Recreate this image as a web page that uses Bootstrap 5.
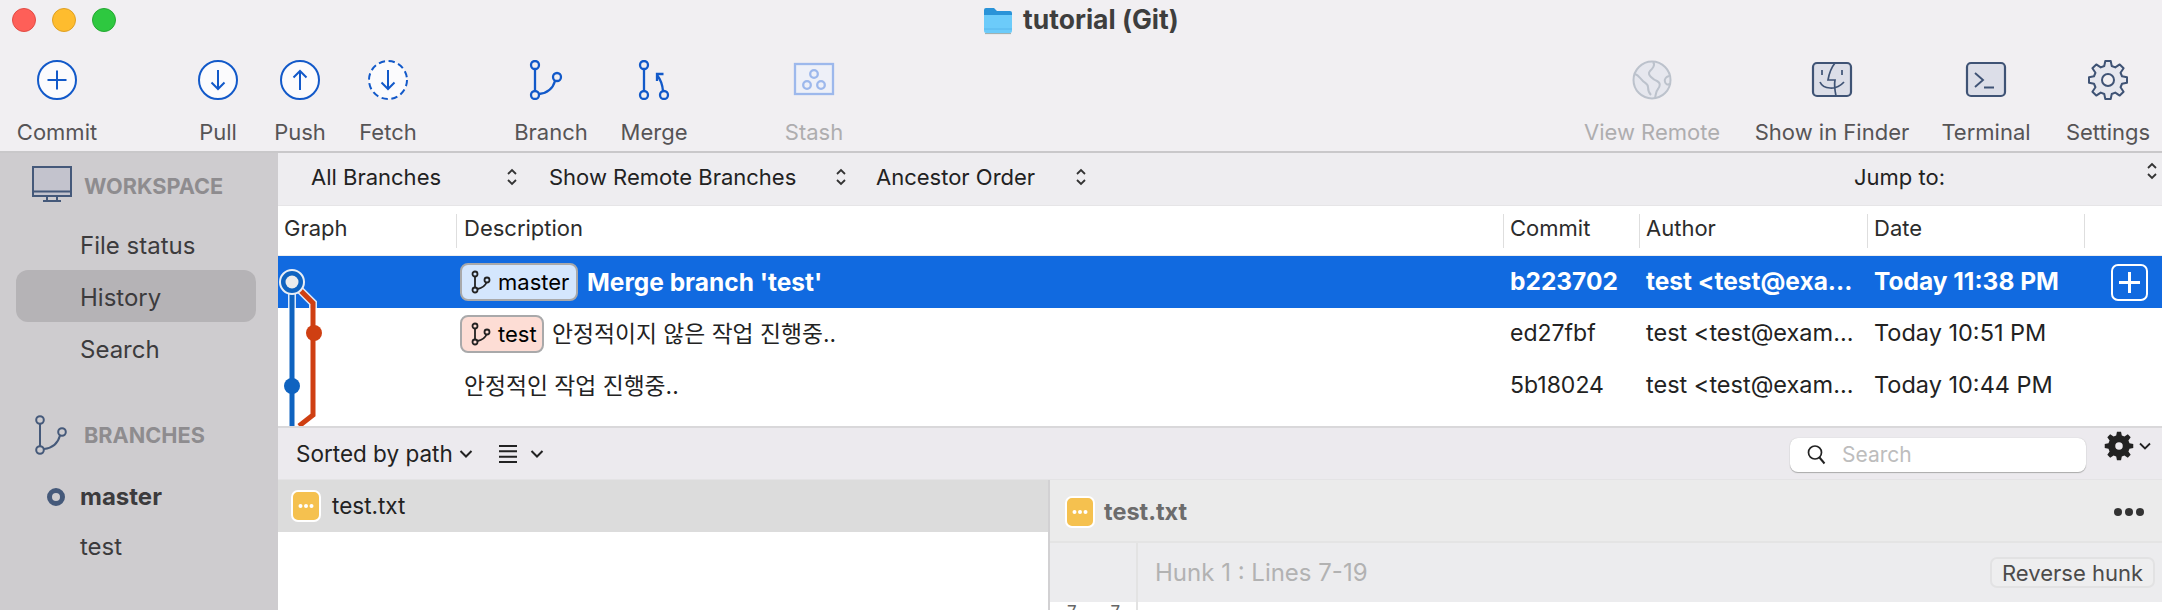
<!doctype html>
<html lang="en">
<head>
<meta charset="utf-8">
<title>tutorial (Git)</title>
<link href="https://cdn.jsdelivr.net/npm/bootstrap@5.3.0/dist/css/bootstrap.min.css" rel="stylesheet">
<style>
html,body{height:610px;overflow:hidden}
body{font-family:Inter,"Noto Sans CJK KR",sans-serif;font-size:22px;color:#222;background:#fff;width:2162px}
.app-top{height:153px;background:#f1eff2;border-bottom:2px solid #c9c8ca}
.title-bar{height:40px;padding-left:12px}
.light{width:24px;height:24px;border-radius:50%;margin-right:16px;flex:none}
.l-red{background:#fe5f58;border:1px solid #e24b44}.l-yel{background:#febc2e;border:1px solid #dfa023}.l-grn{background:#2ec840;border:1px solid #25a832}
.win-title{font-weight:700;font-size:26.500px;color:#3e3e3e;margin-left:851px;gap:10px;white-space:nowrap}
.tools{height:111px}
.tool{height:111px;color:#565456;font-size:22px;padding-top:20px;flex:none}
.tool svg{display:block;height:40px;flex:none}
.tool span{margin-top:20px;line-height:24px;white-space:nowrap}
.tool.off span{color:#aeadaf}
.w114{width:114px}.w72{width:72px}.w92{width:92px}.w84{width:84px}.w90{width:90px}.w116{width:116px}.w160{width:160px}.w200{width:200px}.w108{width:108px}
.gap76{width:76px;flex:none}.gap57{width:57px;flex:none}.gap14{width:14px;flex:none}.gap68{width:68px;flex:none}
.app-body{height:457px}
.side{width:278px;background:#cecccf;flex:none;color:#3c3b3d;font-size:24px}
.side-head{font-weight:700;font-size:21.700px;color:#8e8c8f}
.head-ws{height:56px;padding:13px 0 0 32px;gap:12px}
.head-br{height:50px;margin-top:36px;padding:0 0 0 35px;gap:16px}
.side-item{height:52px;margin:0 22px 0 16px;padding-left:64px;border-radius:12px;line-height:55px}
.side-item.is-on{background:#b5b3b6}
.side-list{margin-top:9px}
.br-item{height:50px;padding-left:80px;line-height:50px}
.br-list{margin-top:12px}
.cur-dot{width:18px;height:18px;border:5px solid #45597a;border-radius:50%;margin-left:-33px;margin-right:15px;flex:none}
.main-col{min-width:0;flex:1}
.filters{height:53px;background:#eeedf0;border-bottom:1px solid #e6e5e7;font-size:22px;color:#222;padding-bottom:4px;white-space:nowrap}
.f1{width:240px;padding-left:33px;flex:none}.f2{width:329px;padding-left:31px;flex:none}.f3{width:240px;padding-left:29px;flex:none}
.f-jump{margin-left:auto;margin-right:201px}
.f-end{position:relative;top:-6px;margin-right:4px}
.ud{flex:none;display:block}
.f1,.f2,.f3{justify-content:space-between}
.log{height:222px;position:relative;background:#fff;border-bottom:2px solid #d9d8da}
.cols{display:grid;grid-template-columns:179px 1047px 136px 228px 217px 77px}
.log-head{height:50px;color:#2c2c2c;font-size:22px;border-bottom:1px solid #eee}
.log-head>div{padding:0 0 5px 6px;line-height:29px;height:34px;margin-top:8px;border-right:1px solid #dedede}
.log-head>div:nth-child(2){padding-left:7px}
.log-head>div:last-child{border-right:0}
.log-row{height:52px;font-size:23.500px;color:#222;align-items:center}
.log-row>div{padding-left:6px;padding-bottom:2px;white-space:nowrap;overflow:hidden}
.log-row .c-hash{font-size:23px}
.log-row.is-sel{background:#116ae0;color:#fff;font-weight:700;font-size:24.500px}
.log-row.is-sel .c-hash{font-size:24.500px}
.log-row .c-desc{padding-left:3px;padding-bottom:0;display:flex;align-items:center;gap:8px;font-size:22.800px}
.is-sel .c-desc{font-size:24.500px!important;gap:9px}
.log-row .c-desc.txt-only{padding-left:7px}
.ref{display:inline-flex;align-items:center;height:38px;border:2px solid #a9a9aa;border-radius:8px;font-weight:400;color:#000;font-size:22px;padding:0 0 0 9px;gap:7px;flex:none}
.ref-m{background:#d4e6fd;width:118px}.ref-t{background:#fdddd5;width:84px}
.add-box{width:37px;height:37px;border:2px solid #fff;border-radius:7px;margin-left:20px;margin-top:2px}
.log-graph{position:absolute;left:0;top:50px}
.strip{height:52px;background:#eceaee;border-bottom:1px solid #e4e3e5;padding-left:18px;font-size:22.500px}
.srt{gap:6px}
.m-l26{margin-left:26px}.m-l13{margin-left:13px}
.srch{width:296px;height:34px;margin-left:auto;margin-top:2px;background:#fff;border:0;border-radius:8px;box-shadow:0 1px 1px #aaa,0 0 1px #bbb;padding-left:17px;gap:15px;color:#bdbdbd;font-size:21px}
.gear-wrap{margin:0 11px 0 18px;gap:5px;position:relative;top:-8px}
.lower{height:130px;overflow:hidden}
.files{width:770px;flex:none;background:#fff}
.file-row{height:52px;background:#dcdcdc;padding-left:13px;gap:11px;font-size:22.500px}
.mod-ic{flex:none;display:block}
.diff{border-left:2px solid #d2d1d3;min-width:0;flex:1;background:#fff}
.diff-head{height:63px;background:#ebebeb;border-bottom:2px solid #e4e4e4;padding:3px 17px 0 15px;gap:9px;font-weight:700;color:#6c6c6c;font-size:23.500px}
.diff-head svg.dots{margin-left:auto}
.hunk{height:59px;background:#ececee}
.gutter{width:88px;flex:none;border-right:2px solid #e3e3e3}
.hunk-txt{padding-left:17px;color:#b2b2b2;font-size:24px;flex:1}
.rev-btn{font-size:22px;line-height:1;color:#4b4b4b;background:#eeeeef;border:2px solid #e2e2e3;border-radius:7px;height:31px;width:165px;padding:0;margin-right:7px;white-space:nowrap}
.rev-btn:hover{color:#4b4b4b;background:#eeeeef;border-color:#e2e2e3}
.line-row{height:20px;background:#fff}
.line-nums{width:88px;flex:none;border-right:2px solid #e3e3e3;font-size:17px;color:#666;padding:0 16px 0 17px;line-height:20px;justify-content:space-between}
</style>
</head>
<body>
<div class="app-top">
  <div class="title-bar d-flex align-items-center">
    <div class="light l-red"></div><div class="light l-yel"></div><div class="light l-grn"></div>
    <div class="win-title d-flex align-items-center">
      <svg width="30" height="30" viewBox="0 0 30 30"><path d="M1 5a2 2 0 0 1 2-2h8l3 3h13a2 2 0 0 1 2 2v4H1z" fill="#2a93d8"/><path d="M1 10h28v16a2 2 0 0 1-2 2H3a2 2 0 0 1-2-2z" fill="#6ccbfa"/><path d="M1 24h28" stroke="#57b6ec" stroke-width="1"/><path d="M2 28.600h26" stroke="#9aa" stroke-width="1"/></svg>
      <span>tutorial (Git)</span>
    </div>
  </div>
  <div class="tools d-flex">
    <div class="tool w114 d-flex flex-column align-items-center">
      <svg width="40" height="40" viewBox="0 0 40 40"><circle cx="20" cy="20" r="19" fill="#fbfbfd" stroke="#1259c9" stroke-width="2"/><path d="M20 10.500v19M10.500 20h19" stroke="#1259c9" stroke-width="2" fill="none"/></svg>
      <span>Commit</span></div>
    <div class="gap68"></div>
    <div class="tool w72 d-flex flex-column align-items-center">
      <svg width="40" height="40" viewBox="0 0 40 40"><circle cx="20" cy="20" r="19" fill="#fbfbfd" stroke="#1259c9" stroke-width="2"/><path d="M20 10v19M13.500 22.500 20 29l6.500-6.500" stroke="#1259c9" stroke-width="2" fill="none"/></svg>
      <span>Pull</span></div>
    <div class="tool w92 d-flex flex-column align-items-center">
      <svg width="40" height="40" viewBox="0 0 40 40"><circle cx="20" cy="20" r="19" fill="#fbfbfd" stroke="#1259c9" stroke-width="2"/><path d="M20 30V11M13.500 17.500 20 11l6.500 6.500" stroke="#1259c9" stroke-width="2" fill="none"/></svg>
      <span>Push</span></div>
    <div class="tool w84 d-flex flex-column align-items-center">
      <svg width="40" height="40" viewBox="0 0 40 40"><circle cx="20" cy="20" r="19" fill="#fbfbfd" stroke="#1259c9" stroke-width="2" stroke-dasharray="6.300 3.650"/><path d="M20 10v19M13.500 22.500 20 29l6.500-6.500" stroke="#1259c9" stroke-width="2" fill="none"/></svg>
      <span>Fetch</span></div>
    <div class="gap76"></div>
    <div class="tool w90 d-flex flex-column align-items-center">
      <svg width="90" height="40" viewBox="0 0 90 40"><g fill="none" stroke="#1259c9" stroke-width="2.300"><circle cx="29" cy="5" r="4"/><circle cx="29" cy="35" r="4"/><circle cx="51" cy="17" r="4"/><path d="M29 9v22M33 34c9-1 14-6 16-13"/></g></svg>
      <span>Branch</span></div>
    <div class="tool w116 d-flex flex-column align-items-center">
      <svg width="116" height="40" viewBox="0 0 116 40"><g fill="none" stroke="#1259c9" stroke-width="2.300"><circle cx="48" cy="5" r="4"/><circle cx="48" cy="35" r="4"/><circle cx="68" cy="35" r="4"/><path d="M48 9v22M67 31c-.500-6-2-11-6-16M61 21v-7h6.500"/></g></svg>
      <span>Merge</span></div>
    <div class="gap57"></div>
    <div class="tool w90 off d-flex flex-column align-items-center">
      <svg width="42" height="40" viewBox="0 0 42 40"><g fill="none" stroke="#9db8ec" stroke-width="2.300"><rect x="2" y="4" width="38" height="30" fill="#eef0f8"/><circle cx="21" cy="14" r="3.800"/><circle cx="14" cy="25" r="3.800"/><circle cx="28" cy="25" r="3.800"/></g></svg>
      <span>Stash</span></div>
    <div class="flex-grow-1"></div>
    <div class="tool w160 off d-flex flex-column align-items-center">
      <svg width="40" height="40" viewBox="0 0 40 40"><g fill="none" stroke="#bcc2cc" stroke-width="2"><circle cx="20" cy="20" r="18.500" fill="#e6e7ee"/><path d="M21 2c3 3-1 7-3 9s-1 4 1 6 3 3 6 4c4 2 3 5 1 8-2 2-2 5-3 9M3 14c3 1 5 4 7 6 2 3 6 3 6 7 0 3 0 5 3 8M37 16c-3 1-5 3-4 6s3 3 5 2"/></g></svg>
      <span>View Remote</span></div>
    <div class="tool w200 d-flex flex-column align-items-center">
      <svg width="42" height="40" viewBox="0 0 42 40"><rect x="2" y="3" width="38" height="33" rx="4" fill="#dcdee8" stroke="#3f5375" stroke-width="2.200"/><g fill="none" stroke="#3f5375" stroke-width="1.700"><path d="M11 10v5M31 10v5M9 22c3 7 16 9 24 0M24 3c-4 5-6 11-7 17h7c-1 5 0 11 1 16"/></g></svg>
      <span>Show in Finder</span></div>
    <div class="tool w108 d-flex flex-column align-items-center">
      <svg width="42" height="40" viewBox="0 0 42 40"><rect x="2" y="3" width="38" height="33" rx="4" fill="#dcdee8" stroke="#3f5375" stroke-width="2.200"/><path d="M10 13l8 7-8 7M19 27.500h10" fill="none" stroke="#3f5375" stroke-width="1.900"/></svg>
      <span>Terminal</span></div>
    <div class="gap14"></div>
    <div class="tool w108 d-flex flex-column align-items-center">
      <svg width="40" height="40" viewBox="0 0 40 40"><polygon points="16.25,5.99 17.29,.99 22.71,.99 23.75,5.99 27.25,7.44 31.74,4.42 35.58,8.26 32.56,12.75 34.01,16.25 39.01,17.29 39.01,22.71 34.01,23.75 32.56,27.25 35.58,31.74 31.74,35.58 27.25,32.56 23.75,34.01 22.71,39.01 17.29,39.01 16.25,34.01 12.75,32.56 8.26,35.58 4.42,31.74 7.44,27.25 5.99,23.75 .99,22.71 .99,17.29 5.99,16.25 7.44,12.75 4.42,8.26 8.26,4.42 12.75,7.44" fill="#e6e7ee" stroke="#3f5375" stroke-width="2" stroke-linejoin="round"/><circle cx="20" cy="20" r="6" fill="#f1eff2" stroke="#3f5375" stroke-width="2"/></svg>
      <span>Settings</span></div>
  </div>
</div>
<div class="app-body d-flex">
  <aside class="side">
    <div class="head-ws side-head d-flex">
      <svg width="40" height="36" viewBox="0 0 40 36"><path d="M1 1h38v29H1z" fill="#c3c3cd" stroke="#45597a" stroke-width="2"/><path d="M1 25.500h38M15 30v4M25 30v4M11 35h18" stroke="#45597a" stroke-width="2" fill="none"/></svg>
      <span class="mt-1">WORKSPACE</span>
    </div>
    <div class="side-list">
      <div class="side-item">File status</div>
      <div class="side-item is-on">History</div>
      <div class="side-item">Search</div>
    </div>
    <div class="head-br side-head d-flex align-items-center">
      <svg width="33" height="40" viewBox="0 0 33 40"><g fill="none" stroke="#45597a" stroke-width="2"><circle cx="5" cy="5" r="3.800"/><circle cx="5" cy="35" r="3.800"/><circle cx="27" cy="17" r="3.800"/><path d="M5 9v22M9 34c9-1 14-6 16-13.500"/></g></svg>
      <span>BRANCHES</span>
    </div>
    <div class="br-list">
      <div class="br-item d-flex align-items-center fw-bold"><div class="cur-dot"></div>master</div>
      <div class="br-item">test</div>
    </div>
  </aside>
  <main class="main-col">
    <div class="filters d-flex align-items-center">
      <div class="f1 d-flex align-items-center"><span>All Branches</span><svg class="ud" width="12" height="20" viewBox="0 0 12 20"><path d="M2 7l4-4 4 4M2 13l4 4 4-4" fill="none" stroke="#333" stroke-width="1.800"/></svg></div>
      <div class="f2 d-flex align-items-center"><span>Show Remote Branches</span><svg class="ud" width="12" height="20" viewBox="0 0 12 20"><path d="M2 7l4-4 4 4M2 13l4 4 4-4" fill="none" stroke="#333" stroke-width="1.800"/></svg></div>
      <div class="f3 d-flex align-items-center"><span>Ancestor Order</span><svg class="ud" width="12" height="20" viewBox="0 0 12 20"><path d="M2 7l4-4 4 4M2 13l4 4 4-4" fill="none" stroke="#333" stroke-width="1.800"/></svg></div>
      <span class="f-jump">Jump to:</span>
      <svg class="ud f-end" width="12" height="20" viewBox="0 0 12 20"><path d="M2 7l4-4 4 4M2 13l4 4 4-4" fill="none" stroke="#333" stroke-width="1.800"/></svg>
    </div>
    <section class="log">
      <div class="cols log-head"><div>Graph</div><div>Description</div><div>Commit</div><div>Author</div><div>Date</div><div></div></div>
      <div class="cols log-row is-sel">
        <div></div>
        <div class="c-desc"><span class="ref ref-m"><svg width="20" height="24" viewBox="0 0 20 24"><g fill="none" stroke="#222" stroke-width="1.800"><circle cx="4" cy="4" r="2.500"/><circle cx="4" cy="20" r="2.500"/><circle cx="16" cy="10" r="2.500"/><path d="M4 6.500v11M6.500 19c5-1 8-4 9-6.500"/></g></svg>master</span><span>Merge branch 'test'</span></div>
        <div class="c-hash">b223702</div>
        <div>test &lt;test@exa...</div>
        <div>Today 11:38 PM</div>
        <div><div class="add-box d-flex align-items-center justify-content-center"><svg width="23" height="23" viewBox="0 0 23 23"><path d="M11.500 1v21M1 11.500h21" stroke="#fff" stroke-width="3"/></svg></div></div>
      </div>
      <div class="cols log-row">
        <div></div>
        <div class="c-desc"><span class="ref ref-t"><svg width="20" height="24" viewBox="0 0 20 24"><g fill="none" stroke="#222" stroke-width="1.800"><circle cx="4" cy="4" r="2.500"/><circle cx="4" cy="20" r="2.500"/><circle cx="16" cy="10" r="2.500"/><path d="M4 6.500v11M6.500 19c5-1 8-4 9-6.500"/></g></svg>test</span><span>안정적이지 않은 작업 진행중..</span></div>
        <div class="c-hash">ed27fbf</div>
        <div>test &lt;test@exam...</div>
        <div>Today 10:51 PM</div>
        <div></div>
      </div>
      <div class="cols log-row">
        <div></div>
        <div class="c-desc txt-only"><span>안정적인 작업 진행중..</span></div>
        <div class="c-hash">5b18024</div>
        <div>test &lt;test@exam...</div>
        <div>Today 10:44 PM</div>
        <div></div>
      </div>
      <svg class="log-graph" width="60" height="170" viewBox="0 0 60 170">
        <g transform="translate(-278,-256)">
          <path d="M292 282v26M300 290l13 13v5" stroke="#fff" stroke-width="8" fill="none" opacity=".85"/>
          <path d="M292 282V426" stroke="#0f63c0" stroke-width="5" fill="none"/>
          <path d="M299 289l14 14v112l-14 11" stroke="#cf3f12" stroke-width="5" fill="none"/>
          <circle cx="292" cy="282" r="12" fill="#0f63c0" stroke="#e8eef6" stroke-width="2"/>
          <circle cx="292" cy="282" r="6.500" fill="#ececec"/>
          <circle cx="314" cy="333" r="8" fill="#cf3f12"/>
          <circle cx="292" cy="386" r="8" fill="#0f63c0"/>
        </g>
      </svg>
    </section>
    <div class="strip d-flex align-items-center">
      <div class="srt d-flex align-items-center"><span>Sorted by path</span><svg width="14" height="10" viewBox="0 0 14 10"><path d="M1.500 2l5.500 5.500L12.500 2" fill="none" stroke="#222" stroke-width="2"/></svg></div>
      <svg class="m-l26" width="18" height="20" viewBox="0 0 18 20"><path d="M0 2h18M0 7.300h18M0 12.700h18M0 18h18" stroke="#222" stroke-width="2"/></svg>
      <svg class="m-l13" width="14" height="10" viewBox="0 0 14 10"><path d="M1.500 2l5.500 5.500L12.500 2" fill="none" stroke="#222" stroke-width="2"/></svg>
      <div class="srch d-flex align-items-center">
        <svg width="20" height="22" viewBox="0 0 20 22"><circle cx="8" cy="8.500" r="6.500" fill="none" stroke="#222" stroke-width="1.700"/><path d="M12.500 13.500l5 6" stroke="#222" stroke-width="2"/></svg>
        <span>Search</span>
      </div>
      <div class="gear-wrap d-flex align-items-center">
        <svg width="30" height="30" viewBox="0 0 40 40"><polygon points="16.25,5.99 17.29,.99 22.71,.99 23.75,5.99 27.25,7.44 31.74,4.42 35.58,8.26 32.56,12.75 34.01,16.25 39.01,17.29 39.01,22.71 34.01,23.75 32.56,27.25 35.58,31.74 31.74,35.58 27.25,32.56 23.75,34.01 22.71,39.01 17.29,39.01 16.25,34.01 12.75,32.56 8.26,35.58 4.42,31.74 7.44,27.25 5.99,23.75 .99,22.71 .99,17.29 5.99,16.25 7.44,12.75 4.42,8.26 8.26,4.42 12.75,7.44" fill="#222"/><circle cx="20" cy="20" r="5" fill="#eceaee"/></svg>
        <svg width="12" height="8" viewBox="0 0 12 8"><path d="M1 1.500l5 5 5-5" fill="none" stroke="#222" stroke-width="1.800"/></svg>
      </div>
    </div>
    <div class="lower d-flex">
      <div class="files">
        <div class="file-row d-flex align-items-center">
          <svg class="mod-ic" width="30" height="32" viewBox="0 0 30 32"><rect x="1" y="1" width="28" height="30" rx="6" fill="#f5c14f" stroke="#fff" stroke-width="2"/><circle cx="9.500" cy="16" r="2" fill="#fff"/><circle cx="15" cy="16" r="2" fill="#fff"/><circle cx="20.500" cy="16" r="2" fill="#fff"/></svg>
          <span>test.txt</span>
        </div>
      </div>
      <div class="diff">
        <div class="diff-head d-flex align-items-center">
          <svg class="mod-ic" width="30" height="32" viewBox="0 0 30 32"><rect x="1" y="1" width="28" height="30" rx="6" fill="#f5c14f" stroke="#fff" stroke-width="2"/><circle cx="9.500" cy="16" r="2" fill="#fff"/><circle cx="15" cy="16" r="2" fill="#fff"/><circle cx="20.500" cy="16" r="2" fill="#fff"/></svg>
          <span>test.txt</span>
          <svg class="dots" width="32" height="10" viewBox="0 0 32 10"><circle cx="5" cy="5" r="4" fill="#333"/><circle cx="16" cy="5" r="4" fill="#333"/><circle cx="27" cy="5" r="4" fill="#333"/></svg>
        </div>
        <div class="hunk d-flex align-items-center">
          <div class="gutter h-100"></div>
          <div class="hunk-txt">Hunk 1 : Lines 7-19</div>
          <button type="button" class="btn rev-btn">Reverse hunk</button>
        </div>
        <div class="line-row d-flex">
          <div class="line-nums d-flex"><span>7</span><span>7</span></div>
        </div>
      </div>
    </div>
  </main>
</div>
<script src="https://cdn.jsdelivr.net/npm/bootstrap@5.3.0/dist/js/bootstrap.bundle.min.js"></script>
</body>
</html>
